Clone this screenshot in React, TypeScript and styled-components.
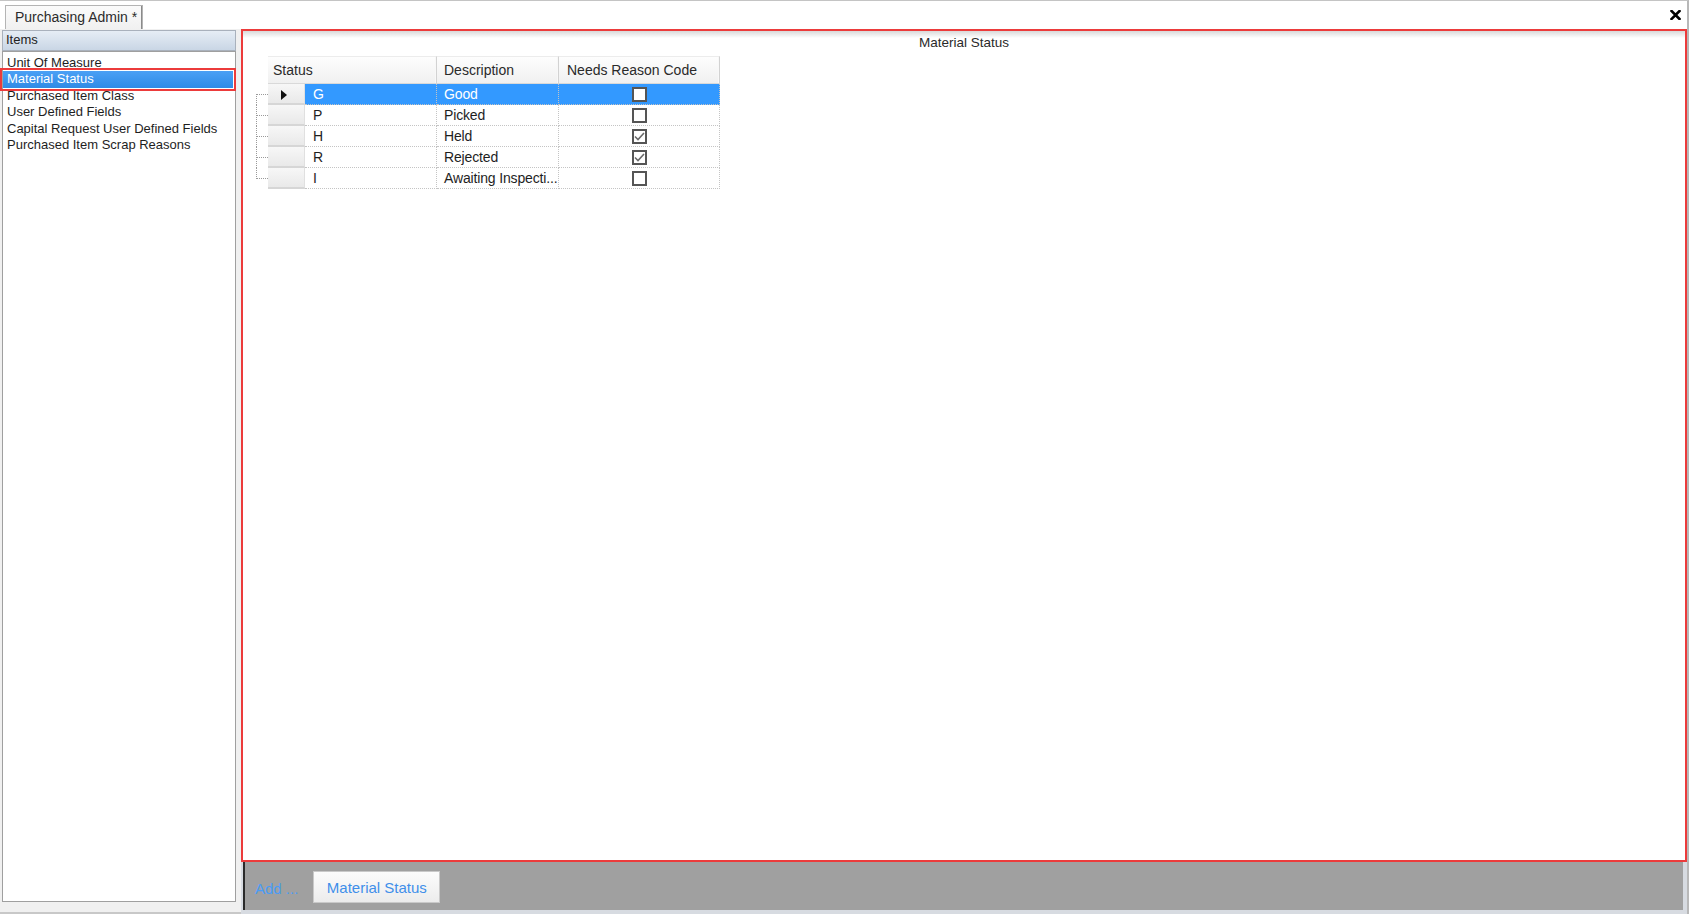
import React from "react";
import styled, { createGlobalStyle, css } from "styled-components";

const GlobalStyle = createGlobalStyle`
  html, body { margin: 0; padding: 0; background: #ffffff; overflow: hidden; }
  body { font-family: "Liberation Sans", Arial, sans-serif; color: #222; }
  * { box-sizing: border-box; }
`;

const Frame = styled.div`
  width: 1689px;
  height: 914px;
  display: flex;
  flex-direction: column;
  background: #ffffff;
  border-top: 1px solid #c4c4c4;
  border-right: 2px solid #b8b8b8;
`;

const TopBar = styled.div`
  height: 28px;
  display: flex;
  align-items: flex-end;
  justify-content: space-between;
  padding-left: 5px;
`;

const Tab = styled.div`
  height: 24px;
  width: 138px;
  padding-left: 9px;
  padding-bottom: 2px;
  display: flex;
  align-items: center;
  font-size: 14px;
  color: #2b2b2b;
  background: linear-gradient(#fbfbfb, #f0f0f0);
  border: 1px solid #b4b4b4;
  border-bottom: none;
  box-shadow: inset -1px 0 0 #8a8a8a;
`;

const Close = styled.div`
  align-self: center;
  margin-right: 6px;
  display: flex;
`;

const Body = styled.div`
  flex: 1;
  display: flex;
  min-height: 0;
`;

const LeftPane = styled.div`
  width: 241px;
  background: #f0f0f0;
  display: flex;
  flex-direction: column;
  padding: 1px 5px 10px 2px;
  border-bottom: 2px solid #c8c8c8;
`;

const ItemsHeader = styled.div`
  height: 21px;
  display: flex;
  align-items: center;
  padding-left: 3px;
  padding-bottom: 2px;
  font-size: 13px;
  color: #222;
  background: linear-gradient(#e6edf5, #c9d6e5);
  border: 1px solid #a9b1bc;
`;

const ListBox = styled.div`
  flex: 1;
  background: #ffffff;
  border: 1px solid #9f9f9f;
  padding: 3px 1px 0 0;
  display: flex;
  flex-direction: column;
`;

const ListItem = styled.div<{ $selected?: boolean }>`
  height: 16.4px;
  line-height: 16px;
  padding-left: 4px;
  font-size: 13px;
  color: #1e1e1e;
  white-space: nowrap;
  ${(p) =>
    p.$selected &&
    css`
      background: linear-gradient(#4ba0f5, #2f8be6);
      color: #ffffff;
      outline: 2px solid #ec3b3b;
      outline-offset: 1px;
      margin-right: 1px;
    `}
`;

const RightPane = styled.div`
  flex: 1;
  display: flex;
  flex-direction: column;
  min-width: 0;
  background: #d7dbe1;
`;

const MainPanel = styled.div`
  flex: 1;
  border: 2px solid #ec3b3b;
  background: linear-gradient(#d9d9d9, #ffffff 7px);
  display: flex;
  flex-direction: column;
`;

const PanelTitle = styled.div`
  height: 25px;
  line-height: 23px;
  text-align: center;
  font-size: 13.5px;
  color: #2a2a2a;
`;

const GridWrap = styled.div`
  margin-left: 13px;
  display: flex;
  flex-direction: column;
  width: 464px;
`;

const cols = "12px 37px 132px 122px 161px";

const HeaderRow = styled.div`
  display: grid;
  grid-template-columns: ${cols};
  height: 28px;
`;

const HeaderCell = styled.div<{ $span?: number; $pad?: number }>`
  grid-column: span ${(p) => p.$span ?? 1};
  display: flex;
  align-items: center;
  padding-left: ${(p) => p.$pad ?? 6}px;
  padding-bottom: 1px;
  font-size: 14px;
  color: #2a2a2a;
  background: linear-gradient(#fdfdfd, #f0f0f0);
  border-top: 1px solid #ececec;
  border-bottom: 1px solid #d9d9d9;
  border-right: 1px solid #d2d2d2;
  box-shadow: inset -1px 0 0 #f8f8f8;
`;

const DataRow = styled.div`
  display: grid;
  grid-template-columns: ${cols};
  height: 21px;
`;

const Connector = styled.div<{ $first?: boolean; $last?: boolean }>`
  position: relative;
  &::before {
    content: "";
    position: absolute;
    left: 0;
    top: ${(p) => (p.$first ? "10px" : "0")};
    bottom: ${(p) => (p.$last ? "10px" : "0")};
    border-left: 1px dotted #9a9a9a;
  }
  &::after {
    content: "";
    position: absolute;
    left: 1px;
    right: 0;
    top: 10px;
    border-top: 1px dotted #9a9a9a;
  }
`;

const Selector = styled.div`
  display: flex;
  align-items: center;
  justify-content: center;
  background: linear-gradient(#f7f7f7, #e9e9e9);
  border-bottom: 2px solid #d6d6d6;
  border-right: 1px solid #e0e0e0;
`;

const Arrow = styled.span`
  width: 0;
  height: 0;
  border-top: 5px solid transparent;
  border-bottom: 5px solid transparent;
  border-left: 6px solid #111;
  margin-left: -4px;
  margin-top: 2px;
`;

const Cell = styled.div<{ $selected?: boolean; $center?: boolean; $pad?: number }>`
  display: flex;
  align-items: center;
  justify-content: ${(p) => (p.$center ? "center" : "flex-start")};
  padding-left: ${(p) => (p.$center ? 0 : p.$pad ?? 7)}px;
  font-size: 14px;
  letter-spacing: -0.15px;
  color: ${(p) => (p.$selected ? "#ffffff" : "#1e1e1e")};
  background: ${(p) => (p.$selected ? "#3399ff" : "#ffffff")};
  border-right: 1px dotted #c4c4c4;
  border-bottom: 1px dotted #c4c4c4;
  white-space: nowrap;
  min-width: 0;
`;

const CheckBox = styled.div`
  width: 15px;
  height: 15px;
  background: #ffffff;
  border: 2px solid #555555;
  display: flex;
  align-items: center;
  justify-content: center;
`;

const BottomBar = styled.div`
  height: 48px;
  background: #a0a0a0;
  margin-left: 2px;
  margin-right: 4px;
  border-left: 2px solid #2a2a2a;
  display: flex;
  align-items: center;
  padding-left: 10px;
  gap: 15px;
`;

const AddLink = styled.span`
  font-size: 15px;
  color: #4a9cf5;
  margin-top: 4px;
`;

const TabButton = styled.div`
  height: 32px;
  width: 127px;
  display: flex;
  align-items: center;
  justify-content: center;
  font-size: 15px;
  color: #3f8fea;
  background: linear-gradient(#fcfcfc, #ececec);
  border: 1px solid #c9c9c9;
  margin-top: 2px;
`;

const BottomStrip = styled.div`
  height: 4px;
  margin-left: 2px;
`;

const items = [
  "Unit Of Measure",
  "Material Status",
  "Purchased Item Class",
  "User Defined Fields",
  "Capital Request User Defined Fields",
  "Purchased Item Scrap Reasons",
];

const rows = [
  { code: "G", desc: "Good", checked: false },
  { code: "P", desc: "Picked", checked: false },
  { code: "H", desc: "Held", checked: true },
  { code: "R", desc: "Rejected", checked: true },
  { code: "I", desc: "Awaiting Inspecti...", checked: false },
];

const Check = () => (
  <svg width="11" height="9" viewBox="0 0 11 9">
    <path d="M1 4.5 L4 7.5 L10 1" fill="none" stroke="#6a6a6a" strokeWidth="1.6" />
  </svg>
);

const CloseIcon = () => (
  <svg width="11" height="10" viewBox="0 0 11 10">
    <path d="M1.5 1 L9.5 9 M9.5 1 L1.5 9" stroke="#000" strokeWidth="2.6" strokeLinecap="square" />
  </svg>
);

export default function App() {
  return (
    <>
      <GlobalStyle />
      <Frame>
        <TopBar>
          <Tab>Purchasing Admin *</Tab>
          <Close>
            <CloseIcon />
          </Close>
        </TopBar>
        <Body>
          <LeftPane>
            <ItemsHeader>Items</ItemsHeader>
            <ListBox>
              {items.map((it) => (
                <ListItem key={it} $selected={it === "Material Status"}>
                  {it}
                </ListItem>
              ))}
            </ListBox>
          </LeftPane>
          <RightPane>
            <MainPanel>
              <PanelTitle>Material Status</PanelTitle>
              <GridWrap>
                <HeaderRow>
                  <div />
                  <HeaderCell $span={2} $pad={5}>Status</HeaderCell>
                  <HeaderCell $pad={7}>Description</HeaderCell>
                  <HeaderCell $pad={8}>Needs Reason Code</HeaderCell>
                </HeaderRow>
                {rows.map((r, i) => {
                  const sel = i === 0;
                  return (
                    <DataRow key={r.code}>
                      <Connector $first={i === 0} $last={i === rows.length - 1} />
                      <Selector>{sel && <Arrow />}</Selector>
                      <Cell $selected={sel} $pad={8}>
                        {r.code}
                      </Cell>
                      <Cell $selected={sel} $pad={7}>
                        {r.desc}
                      </Cell>
                      <Cell $selected={sel} $center>
                        <CheckBox>{r.checked && <Check />}</CheckBox>
                      </Cell>
                    </DataRow>
                  );
                })}
              </GridWrap>
            </MainPanel>
            <BottomBar>
              <AddLink>Add ...</AddLink>
              <TabButton>Material Status</TabButton>
            </BottomBar>
            <BottomStrip />
          </RightPane>
        </Body>
      </Frame>
    </>
  );
}
